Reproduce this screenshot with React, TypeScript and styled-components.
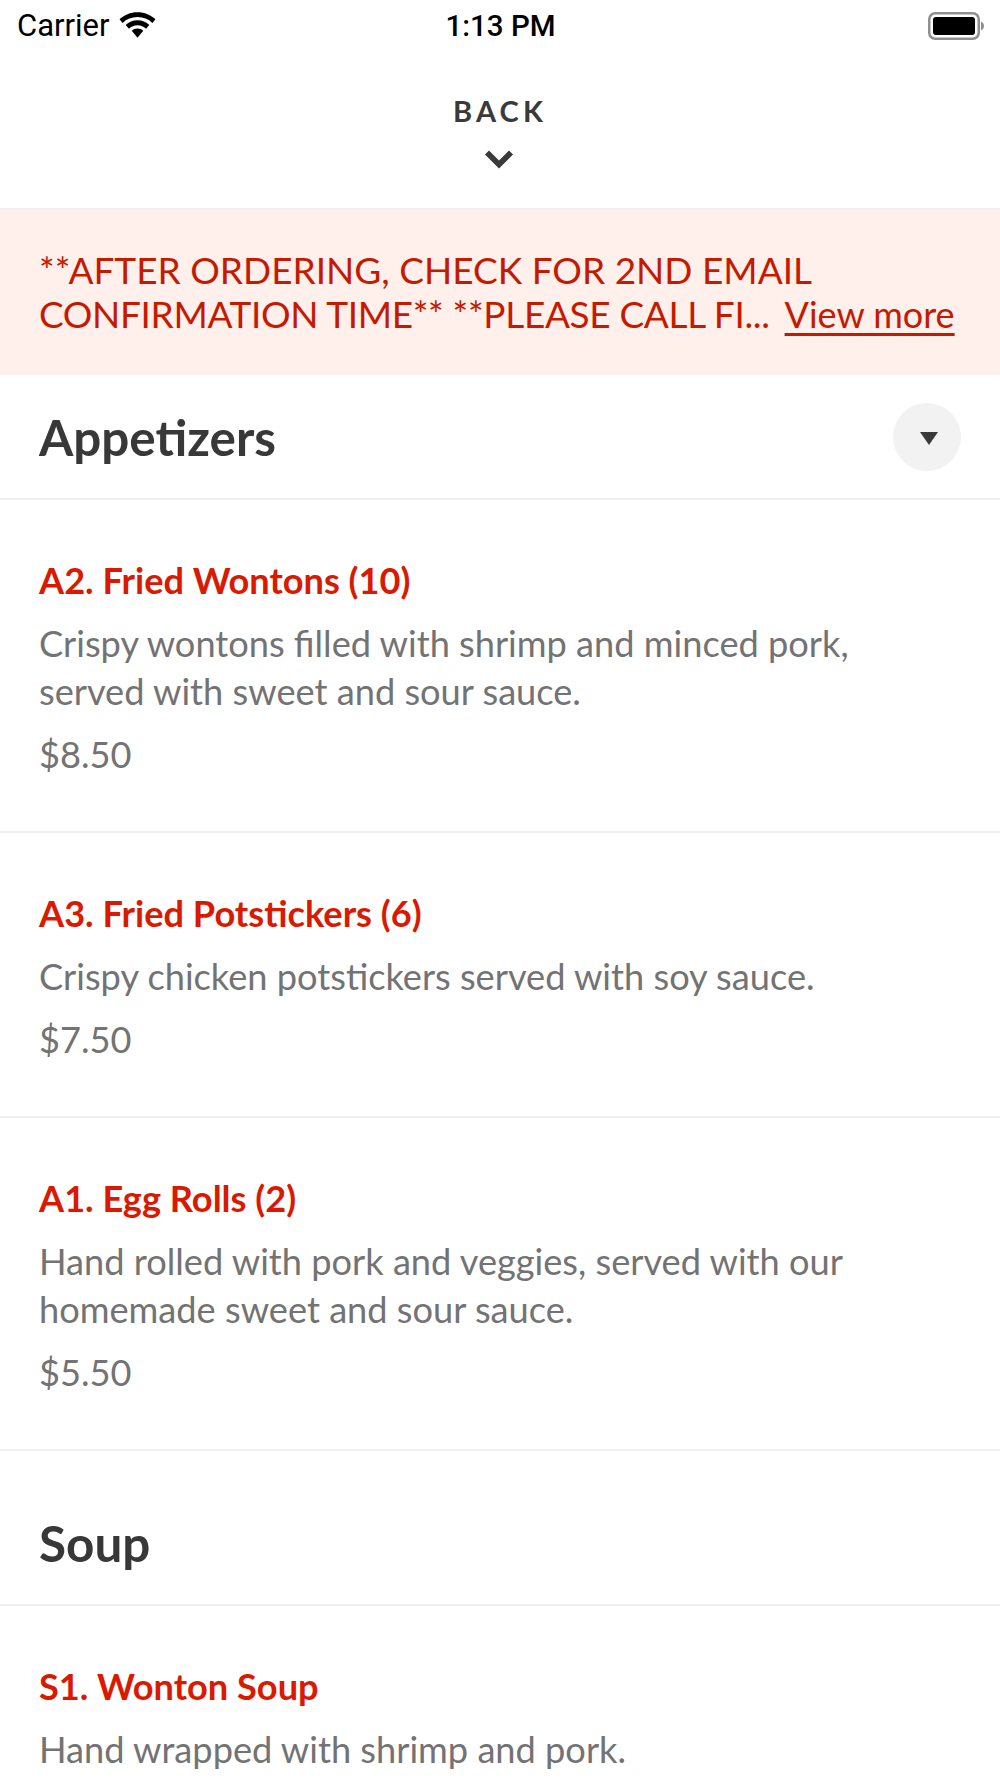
import React from "react";
import styled, { createGlobalStyle } from "styled-components";

const Global = createGlobalStyle`
  html, body { margin: 0; padding: 0; background: #fff; }
  body { font-family: Lato, "Open Sans", sans-serif; }
`;

const Page = styled.div`
  width: 1000px;
  height: 1778px;
  overflow: hidden;
  background: #fff;
`;

const StatusBar = styled.div`
  height: 53px;
  display: grid;
  grid-template-columns: 1fr auto 1fr;
  align-items: center;
  padding: 0 16px 2px 17px;
  box-sizing: border-box;
  font-family: Roboto, "Liberation Sans", sans-serif;
  color: #000;
`;

const StatusLeft = styled.div`
  display: flex;
  align-items: center;
  gap: 9px;
  font-size: 31px;
`;

const StatusTime = styled.div`
  font-size: 29.5px;
  font-weight: 500;
`;

const StatusRight = styled.div`
  display: flex;
  justify-content: flex-end;
`;

const BackBar = styled.div`
  height: 157px;
  box-sizing: border-box;
  padding-top: 41px;
  display: flex;
  flex-direction: column;
  align-items: center;
  border-bottom: 2px solid #f0f0f0;
`;

const BackLabel = styled.div`
  font-size: 29px;
  line-height: 34px;
  font-weight: 700;
  letter-spacing: 4.2px;
  color: #3a3a3a;
`;

const Chevron = styled.svg`
  width: 30px;
  height: 20px;
  margin-top: 22px;
  margin-right: 2px;
`;

const Banner = styled.div`
  background: #fff0ec;
  padding: 38px 39px 0;
  height: 165px;
  box-sizing: border-box;
  font-size: 37px;
  line-height: 44px;
  color: #c41a00;
`;

const BannerLine = styled.div<{ $tight?: boolean }>`
  white-space: nowrap;
  letter-spacing: ${(p) => (p.$tight ? "-0.35px" : "0")};
`;

const ViewMore = styled.span`
  margin-left: 15px;
  font-size: 36px;
  letter-spacing: 0;
  text-decoration: underline;
  text-underline-offset: 5px;
`;

const SectionHeader = styled.div<{ $plain?: boolean }>`
  height: ${(p) => (p.$plain ? "155px" : "125px")};
  box-sizing: border-box;
  padding: ${(p) => (p.$plain ? "31px 39px 0" : "0 39px")};
  display: flex;
  align-items: center;
  justify-content: space-between;
  border-bottom: 2px solid #f0f0f0;
`;

const SectionTitle = styled.h2`
  margin: 0;
  font-size: 49.4px;
  line-height: 60px;
  font-weight: 700;
  color: #383838;
`;

const Toggle = styled.div`
  width: 68px;
  height: 68px;
  border-radius: 50%;
  background: #f2f2f2;
  display: flex;
  align-items: center;
  justify-content: center;
`;

const ToggleArrow = styled.svg`
  width: 18px;
  height: 13px;
  margin: 3px 0 0 3px;
`;

const Item = styled.div`
  padding: 58px 39px 53px;
  border-bottom: 2px solid #f0f0f0;
`;

const ItemTitle = styled.div`
  font-size: 36.2px;
  line-height: 44px;
  font-weight: 700;
  color: #d91a00;
`;

const ItemDesc = styled.div`
  margin-top: 17px;
  font-size: 36.2px;
  line-height: 48px;
  color: #737373;
`;

const ItemPrice = styled.div`
  margin-top: 15px;
  font-size: 36.2px;
  line-height: 48px;
  color: #737373;
`;

const items = [
  { t: "A2. Fried Wontons (10)", d: ["Crispy wontons filled with shrimp and minced pork,", "served with sweet and sour sauce."], p: "$8.50" },
  { t: "A3. Fried Potstickers (6)", d: ["Crispy chicken potstickers served with soy sauce."], p: "$7.50" },
  { t: "A1. Egg Rolls (2)", d: ["Hand rolled with pork and veggies, served with our", "homemade sweet and sour sauce."], p: "$5.50" },
];

const MenuItem = ({ t, d, p }: { t: string; d: string[]; p?: string }) => (
  <Item>
    <ItemTitle>{t}</ItemTitle>
    <ItemDesc>
      {d.map((l) => (
        <div key={l}>{l}</div>
      ))}
    </ItemDesc>
    {p && <ItemPrice>{p}</ItemPrice>}
  </Item>
);

export default function App() {
  return (
    <Page>
      <Global />
      <StatusBar>
        <StatusLeft>
          Carrier
          <svg width="37" height="27" viewBox="0 0 36 26">
            <path d="M18 0C11 0 5 2.6 0.5 7L3.5 10.5C7.3 6.8 12.4 4.8 18 4.8S28.7 6.8 32.5 10.5L35.5 7C31 2.6 25 0 18 0Z" fill="#000" />
            <path d="M18 8C13.5 8 9.5 9.7 6.5 12.6L9.7 16.2C11.9 14.1 14.8 12.8 18 12.8S24.1 14.1 26.3 16.2L29.5 12.6C26.5 9.7 22.5 8 18 8Z" fill="#000" />
            <path d="M18 16C15.8 16 13.9 16.8 12.4 18.2L18 25L23.6 18.2C22.1 16.8 20.2 16 18 16Z" fill="#000" />
          </svg>
        </StatusLeft>
        <StatusTime>1:13 PM</StatusTime>
        <StatusRight>
          <svg width="56" height="28" viewBox="0 0 56 28">
            <rect x="1.25" y="1.25" width="49.5" height="25.5" rx="6" fill="none" stroke="#8f8f8f" strokeWidth="2.5" />
            <rect x="5" y="5" width="42" height="18" rx="3" fill="#000" />
            <path d="M53 9.5C54.8 10.2 56 12 56 14S54.8 17.8 53 18.5Z" fill="#8f8f8f" />
          </svg>
        </StatusRight>
      </StatusBar>
      <BackBar>
        <BackLabel>BACK</BackLabel>
        <Chevron viewBox="0 0 30 20">
          <path d="M1 4.5L5 0.5L15 10.5L25 0.5L29 4.5L15 18.5Z" fill="#3a3a3a" />
        </Chevron>
      </BackBar>
      <Banner>
        <BannerLine>**AFTER ORDERING, CHECK FOR 2ND EMAIL</BannerLine>
        <BannerLine $tight>
          CONFIRMATION TIME** **PLEASE CALL FI...
          <ViewMore>View more</ViewMore>
        </BannerLine>
      </Banner>
      <SectionHeader>
        <SectionTitle>Appetizers</SectionTitle>
        <Toggle>
          <ToggleArrow viewBox="0 0 18 13">
            <path d="M0 0H18L9 13Z" fill="#3a3a3a" />
          </ToggleArrow>
        </Toggle>
      </SectionHeader>
      {items.map((i) => (
        <MenuItem key={i.t} {...i} />
      ))}
      <SectionHeader $plain>
        <SectionTitle>Soup</SectionTitle>
      </SectionHeader>
      <MenuItem t="S1. Wonton Soup" d={["Hand wrapped with shrimp and pork."]} />
    </Page>
  );
}
